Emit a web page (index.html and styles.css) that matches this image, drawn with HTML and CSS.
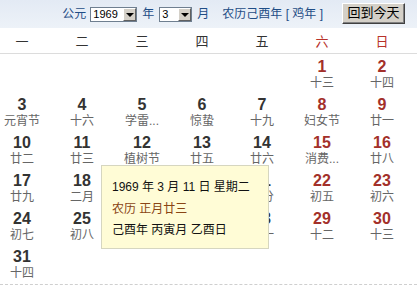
FILE: index.html
```html
<!DOCTYPE html>
<html lang="zh-CN">
<head>
<meta charset="utf-8">
<title>万年历</title>
<link rel="stylesheet" href="styles.css">
</head>
<body>
<div class="cal">
  <div class="bar">
    <span class="lbl">公元</span>
    <span class="sel sel-year"><span class="sel-val">1969</span><span class="sel-btn"></span></span>
    <span class="lbl unit">年</span>
    <span class="sel sel-month"><span class="sel-val">3</span><span class="sel-btn"></span></span>
    <span class="lbl unit">月</span>
    <span class="lbl lunar-year">农历己酉年 [ 鸡年 ]</span>
    <span class="today-btn">回到今天</span>
  </div>
  <div class="weekdays">
    <span>一</span><span>二</span><span>三</span><span>四</span><span>五</span><span class="we">六</span><span class="we">日</span>
  </div>
  <div class="grid">
    <div class="cell empty"></div><div class="cell empty"></div><div class="cell empty"></div><div class="cell empty"></div><div class="cell empty"></div>
    <div class="cell we"><b>1</b><i>十三</i></div>
    <div class="cell we"><b>2</b><i>十四</i></div>
    <div class="cell"><b>3</b><i>元宵节</i></div>
    <div class="cell"><b>4</b><i>十六</i></div>
    <div class="cell"><b>5</b><i>学雷...</i></div>
    <div class="cell"><b>6</b><i>惊蛰</i></div>
    <div class="cell"><b>7</b><i>十九</i></div>
    <div class="cell we"><b>8</b><i>妇女节</i></div>
    <div class="cell we"><b>9</b><i>廿一</i></div>
    <div class="cell"><b>10</b><i>廿二</i></div>
    <div class="cell"><b>11</b><i>廿三</i></div>
    <div class="cell"><b>12</b><i>植树节</i></div>
    <div class="cell"><b>13</b><i>廿五</i></div>
    <div class="cell"><b>14</b><i>廿六</i></div>
    <div class="cell we"><b>15</b><i>消费...</i></div>
    <div class="cell we"><b>16</b><i>廿八</i></div>
    <div class="cell"><b>17</b><i>廿九</i></div>
    <div class="cell"><b>18</b><i>二月</i></div>
    <div class="cell"><b>19</b><i>初二</i></div>
    <div class="cell"><b>20</b><i>初三</i></div>
    <div class="cell"><b>21</b><i>春分</i></div>
    <div class="cell we"><b>22</b><i>初五</i></div>
    <div class="cell we"><b>23</b><i>初六</i></div>
    <div class="cell"><b>24</b><i>初七</i></div>
    <div class="cell"><b>25</b><i>初八</i></div>
    <div class="cell"><b>26</b><i>初九</i></div>
    <div class="cell"><b>27</b><i>初十</i></div>
    <div class="cell"><b>28</b><i>十一</i></div>
    <div class="cell we"><b>29</b><i>十二</i></div>
    <div class="cell we"><b>30</b><i>十三</i></div>
    <div class="cell"><b>31</b><i>十四</i></div>
  </div>
  <div class="tip">
    <div>1969 年 3 月 11 日 星期二</div>
    <div class="tip-lunar">农历 正月廿三</div>
    <div>己酉年 丙寅月 乙酉日</div>
  </div>
</div>
</body>
</html>
```
FILE: styles.css
```css
* { box-sizing: border-box; }
html, body { margin: 0; padding: 0; background: #fff; }
body {
  font-family: "Liberation Sans", "Noto Sans CJK SC", Arial, sans-serif;
  font-size: 12px;
  color: #222;
}
.cal { position: relative; width: 417px; height: 289px; overflow: hidden; }

.bar {
  height: 28px;
  display: flex;
  align-items: center;
  justify-content: flex-end;
  padding-right: 12px;
  background: linear-gradient(#e3eaf4, #edf2f8);
}
.lbl { color: #1f4d86; font-size: 12px; line-height: 14px; white-space: nowrap; }
.unit { margin-left: 5px; }
.lunar-year { margin-left: 13px; }

.sel {
  display: flex;
  align-items: stretch;
  height: 15px;
  border: 1px solid #6f7f90;
  background: #fff;
  margin-left: 4px;
}
.sel-year { width: 47px; }
.sel-month { width: 33px; margin-left: 5px; }
.sel-val { flex: 1; font-size: 11px; line-height: 13px; padding-left: 2px; color: #000; }
.sel-btn {
  width: 13px;
  background: #d4d0c8;
  border: 1px solid;
  border-color: #fff #606060 #606060 #fff;
  position: relative;
}
.sel-btn::after {
  content: "";
  position: absolute;
  left: 2px;
  top: 4px;
  border-left: 4px solid transparent;
  border-right: 4px solid transparent;
  border-top: 4px solid #000;
}

.today-btn {
  margin-left: 19px;
  width: 63px;
  height: 21px;
  background: #d4d0c8;
  border: 1px solid;
  border-color: #fff #404040 #404040 #fff;
  box-shadow: inset -1px -1px 0 #808080;
  font-size: 13px;
  line-height: 18px;
  text-align: center;
  color: #000;
  margin-top: -2px;
}

.weekdays {
  height: 26px;
  display: grid;
  grid-template-columns: repeat(7, 44px);
  column-gap: 16px;
  align-items: center;
  border-bottom: 1px solid #dcdcdc;
  font-size: 13px;
  color: #333;
  text-align: center;
}
.weekdays .we { color: #b8322a; }

.grid {
  margin-top: 2px;
  display: grid;
  grid-template-columns: repeat(7, 44px);
  grid-auto-rows: 38px;
  column-gap: 16px;
  border-bottom: 1px dashed #cfcfcf;
  text-align: center;
}
.cell { display: flex; flex-direction: column; align-items: center; padding-top: 2px; }
.cell b { font-size: 16px; line-height: 18px; font-weight: bold; color: #333; }
.cell i { font-style: normal; font-size: 12px; line-height: 15px; color: #666; white-space: nowrap; }
.cell.we b { color: #a3302a; }

.tip {
  position: absolute;
  left: 101px;
  top: 165px;
  width: 168px;
  height: 84px;
  background: #fffcd6;
  border: 1px solid #d6d6c0;
  padding: 11px 0 0 10px;
  font-size: 12px;
  line-height: 21.5px;
  color: #111;
  white-space: nowrap;
}
.tip-lunar { color: #8a4514; }
```
